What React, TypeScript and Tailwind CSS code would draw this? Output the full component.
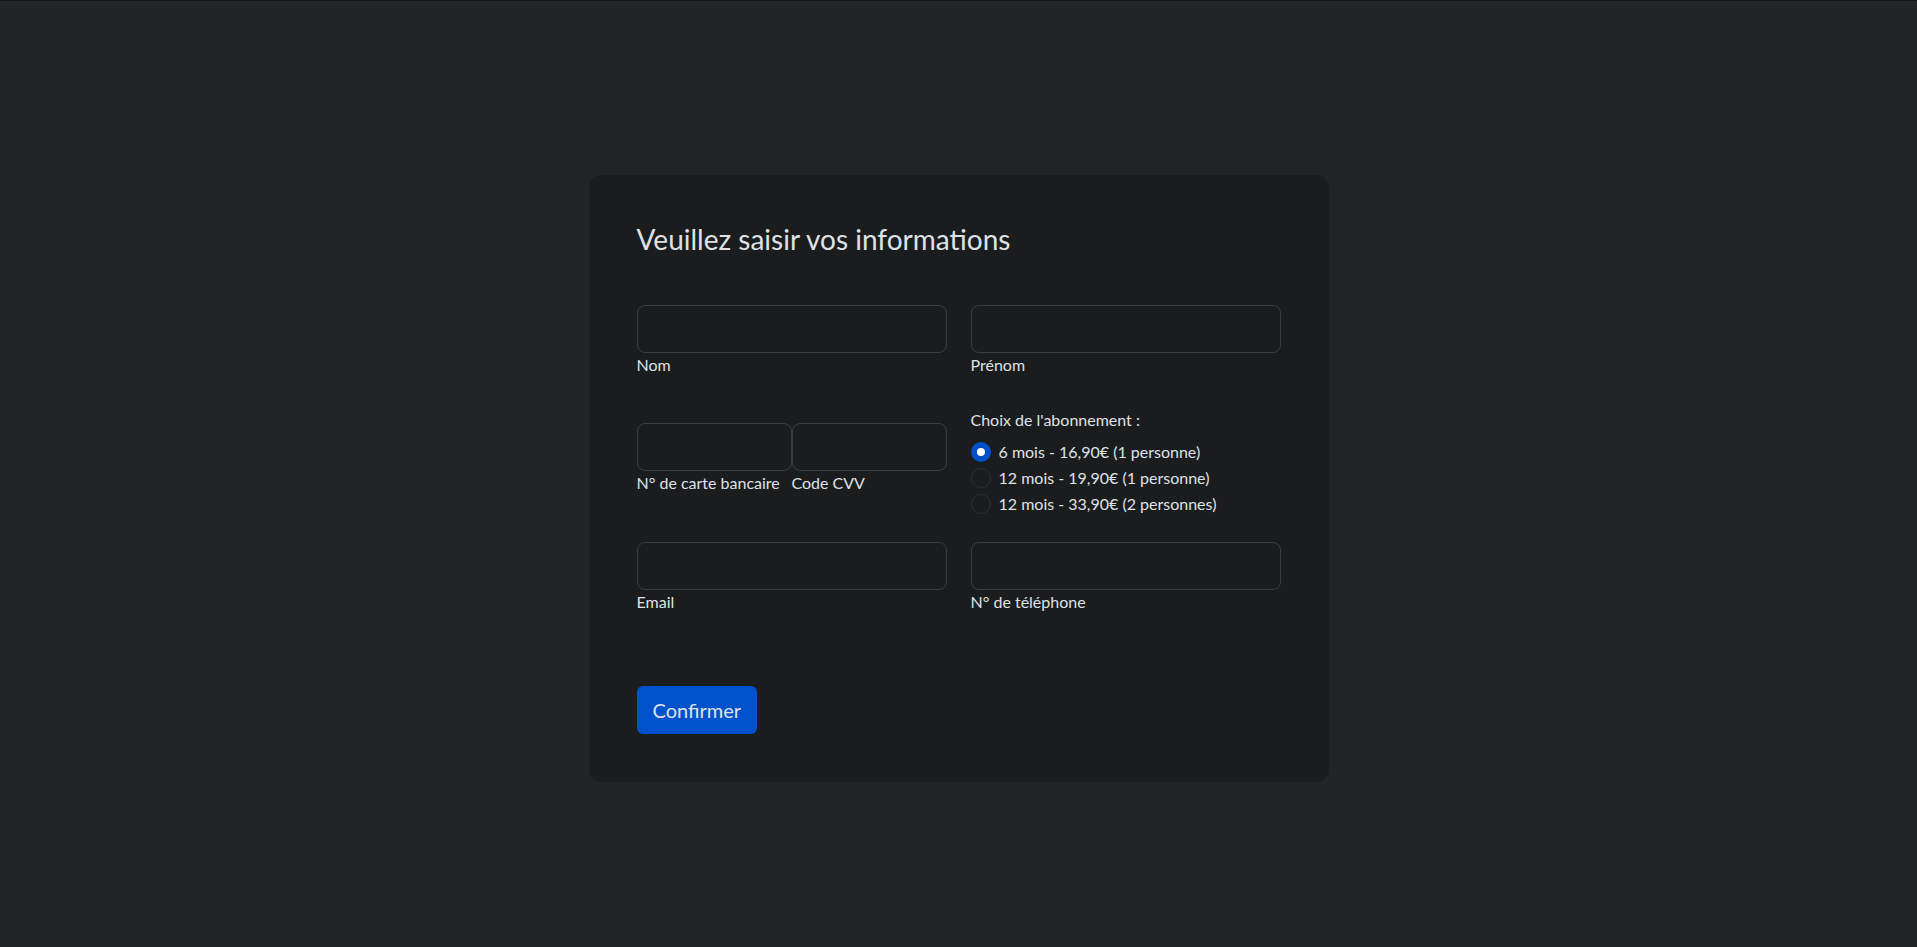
import React, { useState } from 'react';

const font = { fontFamily: 'Lato, "Noto Sans", sans-serif' };

const Field = ({ label }: { label: string }) => (
  <div className="flex flex-col">
    <input
      type="text"
      className="h-12 w-full rounded-lg border border-[#3a3c3e] bg-[#1b1c1e] px-4 text-xl text-[#dee2e6] outline-none"
    />
    <label className="text-base leading-6 text-[#dee2e6]">{label}</label>
  </div>
);

const plans = [
  '6 mois - 16,90€ (1 personne)',
  '12 mois - 19,90€ (1 personne)',
  '12 mois - 33,90€ (2 personnes)',
];

const App = () => {
  const [plan, setPlan] = useState(0);

  return (
    <div className="min-h-screen border-t border-[#141517] bg-[#212526] pt-[174px]" style={font}>
      <div className="mx-auto w-[740px] rounded-xl bg-[#1b1c1e] p-12">
        <h3 className="text-[28px] font-normal leading-[1.2] text-[#dee2e6]">
          Veuillez saisir vos informations
        </h3>

        <div className="mt-12 grid grid-cols-2 gap-x-6">
          <Field label="Nom" />
          <Field label="Prénom" />
        </div>

        <div className="mt-[31px] grid grid-cols-2 items-start gap-x-6">
          <div className="flex pt-[15px]">
            <div className="flex w-[155px] flex-col">
              <input className="h-12 w-full rounded-lg border border-[#3a3c3e] bg-[#1b1c1e] px-4 outline-none" />
              <label className="text-base leading-6 text-[#dee2e6]">N° de carte bancaire</label>
            </div>
            <div className="flex w-[155px] flex-col">
              <input className="h-12 w-full rounded-lg border border-[#3a3c3e] bg-[#1b1c1e] px-4 outline-none" />
              <label className="text-base leading-6 text-[#dee2e6]">Code CVV</label>
            </div>
          </div>

          <div className="flex flex-col">
            <p className="mb-2 text-base leading-6 text-[#dee2e6]">Choix de l'abonnement :</p>
            {plans.map((p, i) => (
              <label
                key={p}
                onClick={() => setPlan(i)}
                className="mb-[2px] flex h-6 cursor-pointer items-center gap-2 text-base text-[#dee2e6]"
              >
                {plan === i ? (
                  <span className="flex h-5 w-5 items-center justify-center rounded-full bg-[#0050c8]">
                    <span className="h-2 w-2 rounded-full bg-white" />
                  </span>
                ) : (
                  <span className="h-5 w-5 rounded-full border border-[#2e3032] bg-[#1b1c1e]" />
                )}
                {p}
              </label>
            ))}
          </div>
        </div>

        <div className="mt-6 grid grid-cols-2 gap-x-6">
          <Field label="Email" />
          <Field label="N° de téléphone" />
        </div>

        <button className="mt-[72px] h-12 rounded-md bg-[#0052cc] px-4 text-xl text-[#dee2e6]">
          Confirmer
        </button>
      </div>
    </div>
  );
};

export default App;
